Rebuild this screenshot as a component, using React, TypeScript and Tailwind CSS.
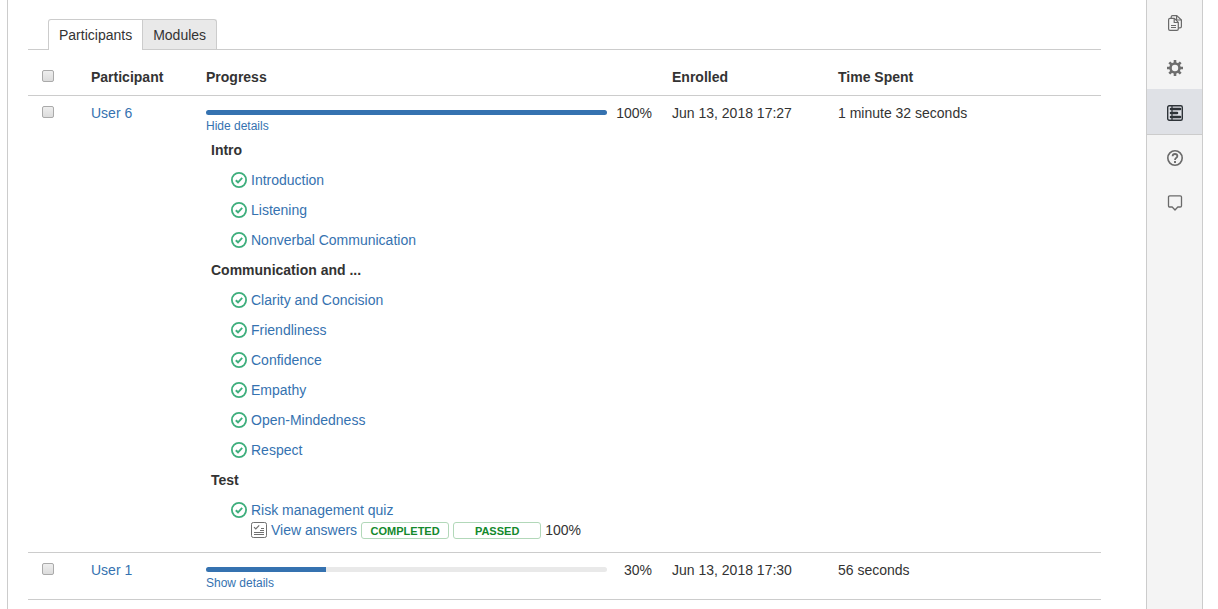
import { useState, type ReactNode } from "react";

const modules = [
  { title: "Intro", lessons: ["Introduction", "Listening", "Nonverbal Communication"] },
  {
    title: "Communication and ...",
    lessons: ["Clarity and Concision", "Friendliness", "Confidence", "Empathy", "Open-Mindedness", "Respect"],
  },
  { title: "Test", lessons: ["Risk management quiz"], quiz: true },
];

const participants = [
  { name: "User 6", progress: 100, enrolled: "Jun 13, 2018 17:27", spent: "1 minute 32 seconds" },
  { name: "User 1", progress: 30, enrolled: "Jun 13, 2018 17:30", spent: "56 seconds" },
];

function CheckCircle() {
  return (
    <svg viewBox="0 0 16 16" className="size-4 shrink-0" fill="none" stroke="#3eae7c" aria-hidden="true">
      <circle cx="8" cy="8" r="7.1" strokeWidth="1.8" />
      <path d="M4.8 8.2 7 10.3l4.2-4.4" strokeWidth="1.9" />
    </svg>
  );
}

function AnswersIcon() {
  return (
    <svg viewBox="0 0 16 16" className="size-4 shrink-0" fill="none" stroke="#707070" aria-hidden="true">
      <rect x=".5" y=".5" width="15" height="15" rx="1.8" />
      <path d="M3 5.2 4.8 7l3.4-3.6" strokeWidth="1.2" />
      <path d="M10 6.5h3M9 8.5h4M3 10.5h10M3 12.5h10" />
    </svg>
  );
}

function PagesIcon() {
  return (
    <svg viewBox="0 0 16 16" className="size-4" fill="none" stroke="#6a6a6a" strokeWidth="1.2" strokeLinejoin="round" aria-hidden="true">
      <path d="M4.2 3.2V2q0-1.400 1.400-1.400h4.200L14.400 5v6.500q0 1.400-1.400 1.400h-1.600" />
      <path d="M9.600.8V5h4.600" />
      <path d="M3 3.400h4.400L11.300 7.300v6.700q0 1.400-1.400 1.400H3q-1.400 0-1.400-1.400V4.800Q1.600 3.400 3 3.400z" />
      <path d="M7.200 3.600v3.900h4M4 10.500h5M4 12.500h5" />
    </svg>
  );
}

function GearIcon() {
  return (
    <svg viewBox="0 0 16 16" className="size-4" fill="none" stroke="#6e6e6e" aria-hidden="true">
      <circle cx="8" cy="8" r="4.5" strokeWidth="2.600" />
      <path
        d="M8 0v3M8 13v3M0 8h3M13 8h3M2.300 2.300l2.200 2.200M11.500 11.500l2.200 2.200M2.300 13.700l2.200-2.200M11.500 4.500l2.200-2.200"
        strokeWidth="2.600"
      />
    </svg>
  );
}

function ReportIcon() {
  return (
    <svg viewBox="0 0 16 16" className="size-4" fill="none" stroke="#2e3338" aria-hidden="true">
      <rect x=".7" y=".7" width="14.600" height="14.600" rx="1.500" strokeWidth="1.400" />
      <path d="M5 1v14" strokeWidth="1.200" />
      <path d="M4 4h9M4 8h6M4 12h9" strokeWidth="2.600" strokeLinecap="round" />
    </svg>
  );
}

function HelpIcon() {
  return (
    <svg viewBox="0 0 16 16" className="size-4" fill="none" stroke="#6a6a6a" aria-hidden="true">
      <circle cx="8" cy="8" r="7.200" strokeWidth="1.600" />
      <path d="M5.600 6.300Q5.700 4 8 4t2.400 2.100Q10.400 7.200 9.100 8 8 8.700 8 10" strokeWidth="1.800" />
      <path d="M8 11v1.900" strokeWidth="1.900" />
    </svg>
  );
}

function CommentIcon() {
  return (
    <svg viewBox="0 0 16 16" className="size-4" fill="none" stroke="#6a6a6a" strokeWidth="1.300" strokeLinejoin="round" aria-hidden="true">
      <path d="M2.800.8h10.400q1.300 0 1.300 1.300v8.600q0 1.300-1.300 1.300h-2.400L8 15l-2.800-3H2.800q-1.300 0-1.300-1.300V2.100Q1.500.8 2.800.8z" />
    </svg>
  );
}

const tools: { label: string; icon: ReactNode; active?: boolean }[] = [
  { label: "Pages", icon: <PagesIcon /> },
  { label: "Settings", icon: <GearIcon /> },
  { label: "Reports", icon: <ReportIcon />, active: true },
  { label: "Help", icon: <HelpIcon /> },
  { label: "Comments", icon: <CommentIcon /> },
];

function Tick({ label }: { label: string }) {
  return (
    <input
      type="checkbox"
      aria-label={label}
      className="ml-3.5 block size-3 appearance-none rounded-[2px] border border-[#aaa] bg-linear-to-b from-[#eee] to-[#dcdcdc] checked:from-[#3572b0] checked:to-[#3572b0]"
    />
  );
}

function Badge({ children }: { children: ReactNode }) {
  return (
    <span className="flex h-[17px] w-[88px] items-center justify-center rounded-[3px] border border-[#b2d8b9] pt-px text-[11px] leading-4 font-bold text-[#14892c]">
      {children}
    </span>
  );
}

function Details() {
  return (
    <div className="mt-px mb-1 pl-[5px]">
      {modules.map((m) => (
        <section key={m.title}>
          <h3 className="py-[5px] leading-5 font-bold">{m.title}</h3>
          <ul className="pl-5">
            {m.lessons.map((lesson) => (
              <li key={lesson} className={m.quiz ? "pt-[5px]" : "py-[5px]"}>
                <a href="#" className="flex items-center gap-1 leading-5 text-[#3572b0]">
                  <CheckCircle />
                  {lesson}
                </a>
                {m.quiz && (
                  <div className="flex items-center gap-1 pl-5 leading-5">
                    <a href="#" className="flex items-center gap-1 text-[#3572b0]">
                      <AnswersIcon />
                      View answers
                    </a>
                    <Badge>COMPLETED</Badge>
                    <Badge>PASSED</Badge>
                    <span>100%</span>
                  </div>
                )}
              </li>
            ))}
          </ul>
        </section>
      ))}
    </div>
  );
}

export default function App() {
  const [open, setOpen] = useState("User 6");
  return (
    <div className="flex min-h-screen bg-white pr-[15px] pl-[7px] font-['Liberation_Sans',Arial,sans-serif] text-sm leading-5 text-[#333]">
      <main className="min-w-0 flex-1 border-l border-[#ccc] pt-[19px] pr-[45px] pl-5">
        <div role="tablist" className="flex border-b border-[#ccc] pl-5">
          <button
            role="tab"
            aria-selected="true"
            className="-mb-px h-[31px] rounded-tl-[3px] border border-b-0 border-[#ccc] bg-white px-2.5"
          >
            Participants
          </button>
          <button
            role="tab"
            aria-selected="false"
            className="h-[30px] rounded-tr-[3px] border border-b-0 border-l-0 border-[#ccc] bg-[#e9e9e9] px-2.5"
          >
            Modules
          </button>
        </div>
        <table className="w-full table-fixed border-collapse text-left">
          <colgroup>
            <col className="w-[63px]" />
            <col className="w-[115px]" />
            <col className="w-[466px]" />
            <col className="w-[166px]" />
            <col />
          </colgroup>
          <thead>
            <tr className="border-b border-[#ccc] align-top">
              <th className="pt-5">
                <Tick label="Select all participants" />
              </th>
              <th className="pt-[17px] pb-2">Participant</th>
              <th className="pt-[17px] pb-2">Progress</th>
              <th className="pt-[17px] pb-2">Enrolled</th>
              <th className="pt-[17px] pb-2">Time Spent</th>
            </tr>
          </thead>
          <tbody>
            {participants.map((p) => (
              <tr key={p.name} className="border-b border-[#ccc] align-top">
                <td className="pt-2.5">
                  <Tick label={`Select ${p.name}`} />
                </td>
                <td className="pt-[7px]">
                  <a href="#" className="text-[#3572b0]">
                    {p.name}
                  </a>
                </td>
                <td className="pt-[7px] pr-5 pb-2">
                  <div className="flex">
                    <div className="flex-1 pt-[7px]">
                      <div className="h-[5px] overflow-hidden rounded-[3px] bg-[#e9e9e9]">
                        <div className="h-full bg-[#3572b0]" style={{ width: `${p.progress}%` }} />
                      </div>
                      <button
                        className="mt-[3px] block text-xs text-[#3572b0]"
                        onClick={() => setOpen(open === p.name ? "" : p.name)}
                      >
                        {open === p.name ? "Hide details" : "Show details"}
                      </button>
                    </div>
                    <span className="w-[45px] text-right">{p.progress}%</span>
                  </div>
                  {open === p.name && <Details />}
                </td>
                <td className="pt-[7px]">{p.enrolled}</td>
                <td className="pt-[7px]">{p.spent}</td>
              </tr>
            ))}
          </tbody>
        </table>
      </main>
      <nav className="w-[57px] shrink-0 overflow-hidden border-x border-[#ccc] bg-[#f4f4f4]">
        {tools.map((t) => (
          <button
            key={t.label}
            aria-label={t.label}
            className={
              t.active
                ? "-mt-px flex h-[46px] w-full items-center justify-center border-y border-t-[#dfe1e6] border-b-[#ccc] bg-[#dfe1e6] pt-0.5"
                : "-mt-px flex h-[46px] w-full items-center justify-center border-y border-transparent pt-0.5"
            }
          >
            {t.icon}
          </button>
        ))}
      </nav>
    </div>
  );
}
